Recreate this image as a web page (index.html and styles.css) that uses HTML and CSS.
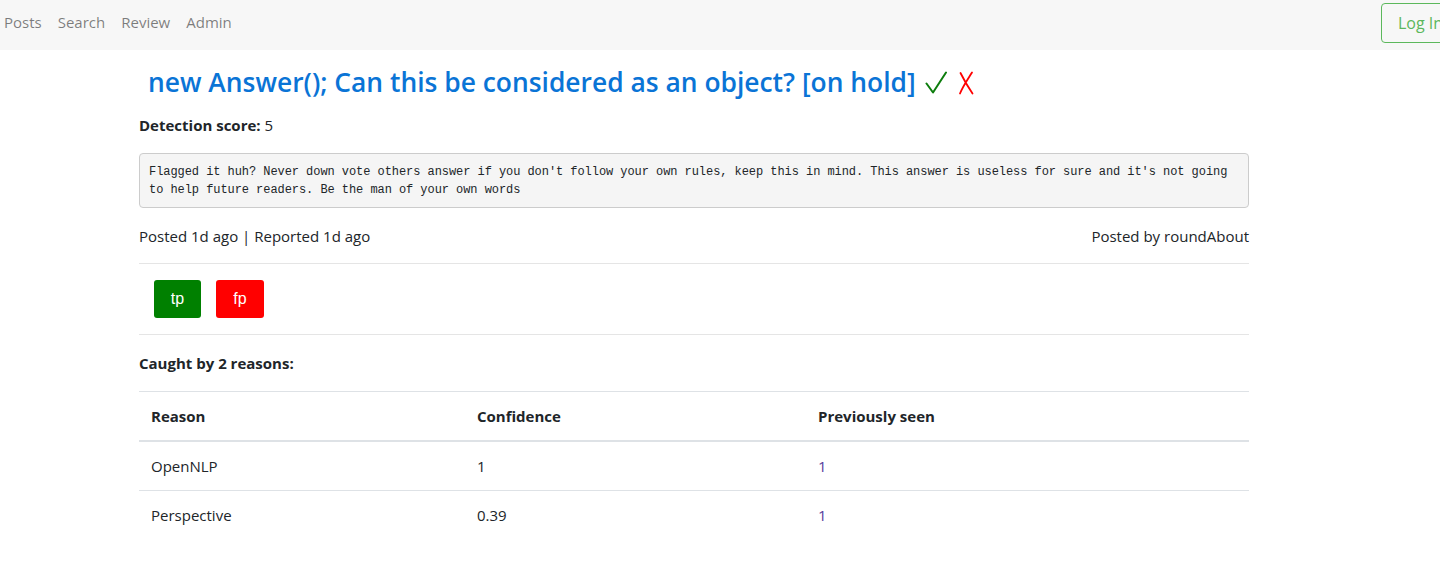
FILE: index.html
```html
<!DOCTYPE html>
<html>
<head>
<meta charset="utf-8">
<link rel="stylesheet" href="styles.css">
</head>
<body>
<nav class="navbar">
  <ul class="nav-links">
    <li><a href="#">Posts</a></li>
    <li><a href="#">Search</a></li>
    <li><a href="#">Review</a></li>
    <li><a href="#">Admin</a></li>
  </ul>
  <a class="btn-login" href="#">Log In</a>
</nav>
<main class="container">
  <h3 class="title"><a href="#">new Answer(); Can this be considered as an object? [on hold]</a>
    <svg class="mark" width="22" height="24" viewBox="0 0 22 24" aria-label="tick"><path d="M1.5 12.5 L8 21.5 L21 1.5" fill="none" stroke="#0d7d0d" stroke-width="2" stroke-linecap="round" stroke-linejoin="round"/></svg>
    <svg class="mark cross" width="16" height="24" viewBox="0 0 16 24" aria-label="cross"><path d="M14 1.5 C10 8 5 15 2 22.5 M2.5 2 C6 9 10 16 14.5 22.5" fill="none" stroke="#ff0000" stroke-width="1.8" stroke-linecap="round"/></svg>
  </h3>
  <p class="score"><strong>Detection score:</strong> 5</p>
  <pre class="body-text">Flagged it huh? Never down vote others answer if you don't follow your own rules, keep this in mind. This answer is useless for sure and it's not going
to help future readers. Be the man of your own words</pre>
  <div class="meta">
    <span>Posted 1d ago | Reported 1d ago</span>
    <span>Posted by roundAbout</span>
  </div>
  <hr>
  <div class="actions">
    <button class="btn btn-tp">tp</button>
    <button class="btn btn-fp">fp</button>
  </div>
  <hr>
  <p class="caught"><strong>Caught by 2 reasons:</strong></p>
  <table class="table">
    <thead>
      <tr><th class="c1">Reason</th><th class="c2">Confidence</th><th class="c3">Previously seen</th></tr>
    </thead>
    <tbody>
      <tr><td>OpenNLP</td><td>1</td><td><a href="#">1</a></td></tr>
      <tr><td>Perspective</td><td>0.39</td><td><a href="#">1</a></td></tr>
    </tbody>
  </table>
</main>
</body>
</html>
```
FILE: styles.css
```css
html, body {
  margin: 0;
  padding: 0;
  overflow: hidden;
}
body {
  font-family: "Open Sans", "Noto Sans", sans-serif;
  font-size: 15px;
  line-height: 1.5;
  color: #212529;
  background: #fff;
}
a { text-decoration: none; }

.navbar {
  box-sizing: border-box;
  height: 50px;
  padding-bottom: 5px;
  background: #f7f7f7;
  display: flex;
  align-items: center;
  width: 1505px;
}
.nav-links {
  list-style: none;
  margin: 0;
  padding: 0;
  display: flex;
}
.nav-links a {
  display: block;
  padding: 0 8px;
  color: rgba(0,0,0,0.5);
  font-size: 15px;
}
.nav-links li:first-child a { padding-left: 4px; }
.btn-login {
  margin-left: auto;
  display: block;
  border: 1px solid #5cb85c;
  color: #5cb85c;
  border-radius: 4px;
  padding: 7px 16px;
  font-size: 16px;
  line-height: 24px;
  width: 90px;
}

.container {
  width: 1110px;
  margin-left: 139px;
}
.title {
  margin: 12px 0 0 9px;
  font-size: 26.4px;
  font-weight: 600;
  line-height: 40px;
  display: flex;
  align-items: center;
}
.title a { color: #0a74d6; }
.mark { margin-left: 9px; margin-top: 2px; }
.mark.cross { margin-left: 11px; }

.score {
  margin: 12px 0 0;
  font-size: 15px;
}
.score strong { font-weight: 700; }

.body-text {
  margin: 16px 0 0;
  padding: 9px 9px 8px;
  background: #f5f5f5;
  border: 1px solid #ccc;
  border-radius: 4px;
  font-family: "Liberation Mono", "DejaVu Sans Mono", monospace;
  font-size: 12px;
  letter-spacing: -0.06px;
  line-height: 18px;
  color: #212529;
  white-space: pre-wrap;
}

.meta {
  display: flex;
  justify-content: space-between;
  margin-top: 17px;
  font-size: 15px;
}

hr {
  border: 0;
  border-top: 1px solid rgba(0,0,0,0.1);
  margin: 16px 0 16px;
}

.actions {
  display: flex;
  gap: 15px;
  padding-left: 15px;
}
.btn {
  border: 0;
  border-radius: 3px;
  color: #fff;
  font-family: "Liberation Sans", Arial, sans-serif;
  font-size: 16px;
  height: 38px;
  width: 47px;
  padding: 0;
}
.btn-tp { background: #008000; }
.btn-fp { background: #ff0000; width: 48px; }

.caught {
  margin: 17px 0 16px;
  font-size: 15px;
}

.table {
  width: 100%;
  border-collapse: collapse;
  font-size: 15px;
}
.table th, .table td {
  text-align: left;
  padding: 12px;
  border-top: 1px solid #dee2e6;
  line-height: 24px;
}
.table thead th {
  border-bottom: 2px solid #dee2e6;
  font-weight: 700;
}
.c1 { width: 302px; }
.c2 { width: 317px; }
.table td a { color: #563d9c; }
```
